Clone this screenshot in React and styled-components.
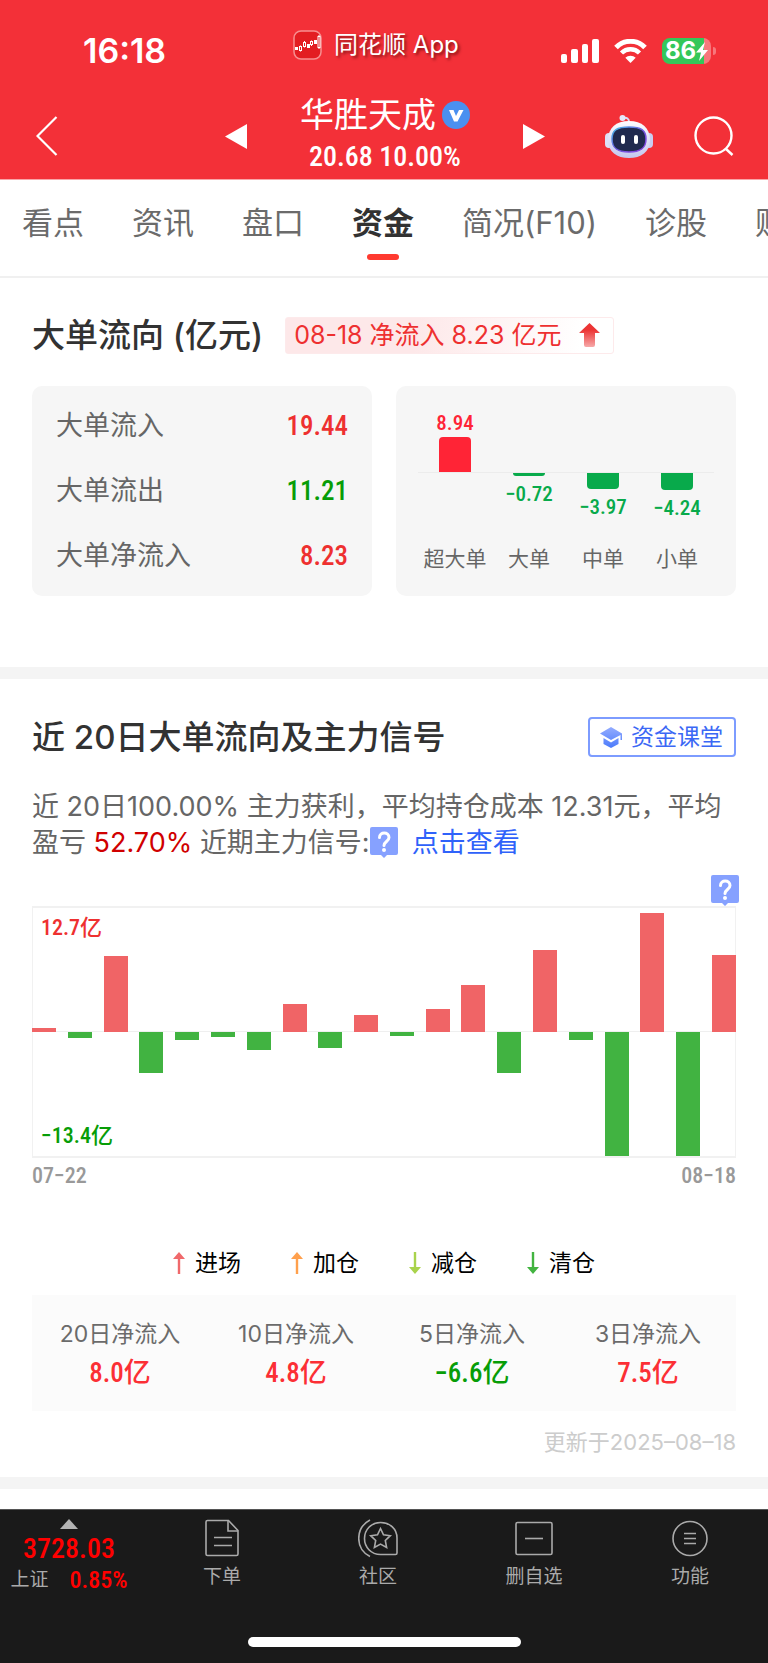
import React from 'react';
import styled, { createGlobalStyle } from 'styled-components';

const textFont = 'Inter, "Noto Sans CJK SC", sans-serif';
const numberFont = '"Roboto Condensed", "Noto Sans CJK SC", sans-serif';

const RED = '#ee3030';
const GREEN = '#079d07';

const GlobalStyle = createGlobalStyle`
  * {
    box-sizing: border-box;
  }
  body {
    margin: 0;
    background: #fff;
    color: #323232;
    font-family: ${textFont};
  }
  button {
    padding: 0;
    border: 0;
    background: none;
    color: inherit;
    font: inherit;
    cursor: pointer;
  }
  h1, h2, p, dl, dd {
    margin: 0;
  }
  svg {
    display: block;
    flex-shrink: 0;
  }
`;

const Header = styled.header`
  padding-bottom: 1px;
  background: #f33038;
  border-bottom: 1px solid #f9a5a8;
  color: #fff;
`;

const StatusBar = styled.div`
  display: flex;
  align-items: center;
  height: 94px;
  padding: 8px 52px 0 83px;
`;

const Clock = styled.span`
  font-size: 34px;
  font-weight: 600;
  line-height: 40px;
`;

const AppName = styled.span`
  display: flex;
  align-items: center;
  gap: 12px;
  margin: 0 auto 12px 127px;
  font-size: 24px;
  line-height: 32px;
  text-shadow: 2px 2px 3px rgba(60, 0, 0, 0.6);
`;

const StatusIcons = styled.div`
  display: flex;
  align-items: center;
  gap: 15px;
`;

const Battery = styled.div`
  display: flex;
  align-items: center;
  gap: 2px;

  &::after {
    content: '';
    width: 3px;
    height: 8px;
    border-radius: 0 3px 3px 0;
    background: #f7777c;
  }
`;

const BatteryBody = styled.span`
  display: flex;
  align-items: center;
  justify-content: center;
  width: 49px;
  height: 26px;
  border-radius: 8px;
  background: linear-gradient(90deg, #34c759 86%, #f7777c 86%);
  font-size: 24px;
  font-weight: 700;
  line-height: 26px;
`;

const StockNav = styled.div`
  display: grid;
  grid-template-columns: 1fr 320px 1fr;
  align-items: center;
  padding: 0 34px 0 36px;
`;

const StockSwitch = styled.div`
  display: flex;
  align-items: center;
  justify-content: space-between;
`;

const StockTitle = styled.div`
  text-align: center;
`;

const StockName = styled.h1`
  display: flex;
  align-items: center;
  gap: 6px;
  font-size: 34px;
  font-weight: 400;
  line-height: 42px;
`;

const StockPrice = styled.p`
  font-family: ${numberFont};
  font-size: 28px;
  font-weight: 500;
  line-height: 42px;
`;

const NavActions = styled.div`
  display: flex;
  align-items: center;
  justify-content: flex-end;
  gap: 41px;
`;

const Tabs = styled.nav`
  display: flex;
  gap: 48px;
  height: 98px;
  padding: 25px 0 0 22px;
  border-bottom: 2px solid #f0f0f0;
  overflow: hidden;
  white-space: nowrap;
`;

const Tab = styled.a`
  display: flex;
  flex-direction: column;
  align-items: center;
  flex-shrink: 0;
  gap: 13px;
  color: ${(p) => (p.$active ? '#323232' : '#6b6b6b')};
  font-size: 31px;
  font-weight: ${(p) => (p.$active ? 700 : 400)};
  line-height: 36px;
  text-decoration: none;

  &::after {
    content: '';
    width: 32px;
    height: 6px;
    border-radius: 3px;
    background: ${(p) => (p.$active ? '#ff3a30' : 'transparent')};
  }
`;

const Section = styled.section`
  padding: ${(p) => p.$padding};
  border-bottom: 12px solid #f4f4f4;
`;

const SectionHead = styled.div`
  display: flex;
  align-items: center;
  gap: 22px;
  height: 40px;
`;

const SectionTitle = styled.h2`
  font-size: 33px;
  font-weight: 500;
  line-height: 40px;
  white-space: nowrap;
`;

const FlowBadge = styled.span`
  display: flex;
  align-items: center;
  gap: 18px;
  height: 37px;
  padding: 0 13px 0 8px;
  border: 1px solid #fdeaeb;
  border-radius: 3px;
  background: linear-gradient(100deg, #fde8e9 40%, #fff 90%);
  color: ${RED};
  font-size: 25px;
  line-height: 35px;
  white-space: nowrap;
`;

const Cards = styled.div`
  display: grid;
  grid-template-columns: 1fr 1fr;
  gap: 24px;
  margin-top: 31px;
`;

const FlowList = styled.dl`
  display: flex;
  flex-direction: column;
  gap: 25px;
  padding: 20px 24px;
  border-radius: 10px;
  background: #f6f6f6;
`;

const FlowRow = styled.div`
  display: flex;
  align-items: center;
  justify-content: space-between;
  color: #666;
  font-size: 27px;
  line-height: 40px;
`;

const FlowValue = styled.dd`
  color: ${(p) => p.$color};
  font-family: ${numberFont};
  font-size: 27px;
  font-weight: 500;
`;

const OrderCard = styled.div`
  display: grid;
  grid-template-columns: repeat(4, 1fr);
  padding: 23px 22px 22px;
  border-radius: 10px;
  background: #f6f6f6;
`;

const OrderColumn = styled.div`
  display: flex;
  flex-direction: column;
  align-items: center;
  color: #666;
  font-size: 21px;
  line-height: 28px;
  white-space: nowrap;
`;

const BarArea = styled.div`
  display: flex;
  flex-direction: column;
  align-items: center;
  justify-content: ${(p) => (p.$up ? 'flex-end' : 'flex-start')};
  align-self: stretch;
  gap: ${(p) => (p.$up ? 0 : 5)}px;
  height: ${(p) => (p.$up ? 64 : 72)}px;
  border-bottom: ${(p) => (p.$up ? '1px solid #ececec' : '0')};
  color: ${(p) => (p.$up ? '#ff2436' : '#08aa4b')};
  font-family: ${numberFont};
  font-weight: 500;
  line-height: 27px;
`;

const OrderBar = styled.span`
  flex-shrink: 0;
  width: 32px;
  border-radius: ${(p) => (p.$up ? '4px 4px 0 0' : '0 0 4px 4px')};
  background: currentColor;
`;

const CourseButton = styled.button`
  display: flex;
  align-items: center;
  gap: 9px;
  height: 40px;
  margin-left: auto;
  padding: 0 11px 0 10px;
  border: 2px solid #7d9cff;
  border-radius: 4px;
  color: #3b68f5;
  font-size: 23px;
  line-height: 36px;
`;

const Summary = styled.p`
  margin-top: 32px;
  color: #666;
  font-size: 27px;
  line-height: 36px;
`;

const Percent = styled.span`
  color: #d00000;
`;

const ViewLink = styled.a`
  margin-left: 14px;
  color: #2f62fa;
  text-decoration: none;
`;

const HelpButton = styled.button`
  display: inline-block;
  vertical-align: ${(p) => (p.$inline ? '-6px' : 'top')};
`;

const ChartHelp = styled.div`
  display: flex;
  justify-content: flex-end;
  margin: 14px -3px 0 0;
`;

const ChartBox = styled.div`
  position: relative;
  border: 1px solid #f1f1f1;
  border-width: 2px 0;
  box-shadow: inset 1px 0 #f1f1f1, inset -1px 0 #f1f1f1;

  svg {
    width: 100%;
    height: 248px;
  }
`;

const ChartLimit = styled.span`
  position: absolute;
  left: 9px;
  ${(p) => (p.$low ? 'bottom: 5px' : 'top: 5px')};
  color: ${(p) => (p.$low ? GREEN : RED)};
  font-family: ${numberFont};
  font-size: 22px;
  font-weight: 500;
  line-height: 30px;
`;

const DateRange = styled.div`
  display: flex;
  justify-content: space-between;
  margin-top: 4px;
  color: #999;
  font-family: ${numberFont};
  font-size: 22px;
  font-weight: 500;
  line-height: 28px;
`;

const Legend = styled.div`
  display: flex;
  justify-content: center;
  gap: 50px;
  margin-top: 58px;
  color: #000;
  font-size: 23px;
  line-height: 30px;
`;

const LegendItem = styled.span`
  display: flex;
  align-items: center;
  gap: 10px;
`;

const Totals = styled.dl`
  display: grid;
  grid-template-columns: repeat(4, 1fr);
  margin-top: 17px;
  padding: 20px 0 17px;
  background: #fbfbfb;
  text-align: center;
`;

const TotalLabel = styled.dt`
  color: #6b6b6b;
  font-size: 23px;
  line-height: 38px;
`;

const TotalValue = styled.dd`
  color: ${(p) => p.$color};
  font-family: ${numberFont};
  font-size: 27px;
  font-weight: 500;
  line-height: 41px;
`;

const Updated = styled.p`
  margin-top: 17px;
  color: #ccc;
  font-size: 22px;
  line-height: 28px;
  text-align: right;
`;

const Footer = styled.footer`
  margin-top: 20px;
  padding-bottom: 16px;
  border-top: 1px solid #555;
  background: #1a1a1a;
`;

const BottomNav = styled.nav`
  display: grid;
  grid-template-columns: 144px repeat(4, 1fr);
  height: 127px;
`;

const IndexButton = styled.button`
  display: flex;
  flex-direction: column;
  align-items: center;
  padding: 9px 6px 0 0;
`;

const IndexPoint = styled.span`
  color: #f00;
  font-family: ${numberFont};
  font-size: 28px;
  font-weight: 500;
  line-height: 32px;
  margin-top: 4px;
`;

const IndexChange = styled.span`
  display: flex;
  gap: 21px;
  color: #f00;
  font-family: ${numberFont};
  font-size: 24px;
  font-weight: 500;
  line-height: 30px;
`;

const IndexName = styled.span`
  color: #aaa;
  font-size: 19px;
  font-weight: 400;
`;

const BottomButton = styled.button`
  display: flex;
  flex-direction: column;
  align-items: center;
  gap: 4px;
  padding-top: 8px;
  color: #aaa;
  font-size: 19px;
  line-height: 28px;
`;

const HomeIndicator = styled.div`
  width: 273px;
  height: 10px;
  margin: 0 auto;
  border-radius: 5px;
  background: #fff;
`;

const tabs = ['看点', '资讯', '盘口', '资金', '简况(F10)', '诊股', '财务'];

const flows = [
  { label: '大单流入', value: '19.44', color: RED },
  { label: '大单流出', value: '11.21', color: GREEN },
  { label: '大单净流入', value: '8.23', color: RED },
];

const orders = [
  { label: '超大单', value: 8.94 },
  { label: '大单', value: -0.72 },
  { label: '中单', value: -3.97 },
  { label: '小单', value: -4.24 },
];

// net inflow per day, in 亿
const days = [
  0.45, -0.6, 8.1, -4.4, -0.9, -0.5, -1.9, 3, -1.7, 1.8, -0.4, 2.5, 5.05, -4.4,
  8.8, -0.9, -13.3, 12.7, -13.4, 8.2,
];

const signals = [
  { label: '进场', color: '#f0696b', up: true },
  { label: '加仓', color: '#ffa04d', up: true },
  { label: '减仓', color: '#a9d34c', up: false },
  { label: '清仓', color: '#43b440', up: false },
];

const totals = [
  { label: '20日净流入', value: '8.0亿', color: '#fb2f35' },
  { label: '10日净流入', value: '4.8亿', color: '#fb2f35' },
  { label: '5日净流入', value: '−6.6亿', color: GREEN },
  { label: '3日净流入', value: '7.5亿', color: '#fb2f35' },
];

const AppLogo = () => (
  <svg width="29" height="30" viewBox="0 0 29 30">
    <rect x="1" y="1" width="27" height="28" rx="7" fill="#e31d22" stroke="#f78f90" strokeWidth="1.5" />
    <g fill="#fff">
      <rect x="2" y="17" width="3" height="3" />
      <rect x="14" y="14" width="3" height="4" />
      <rect x="21" y="10" width="3" height="4" />
    </g>
    <g fill="none" stroke="#fff">
      <path d="M7.500 15.500v1M7.500 20.500v1M11.500 11v1.500M11.500 16.500v1M18.500 10.500v1M18.500 14.500v1.500M26 5v2M26 17v2" />
      <rect x="6.500" y="16.500" width="2" height="4" />
      <rect x="10.500" y="12.500" width="2" height="4" />
      <rect x="17.500" y="11.500" width="2" height="3" />
      <rect x="25" y="6.500" width="2" height="11" />
    </g>
  </svg>
);

const Signal = () => (
  <svg width="38" height="24" viewBox="0 0 38 24" fill="#fff">
    <rect x="0" y="15" width="6" height="9" rx="2" />
    <rect x="10" y="10" width="7" height="14" rx="2" />
    <rect x="21" y="5" width="6" height="19" rx="2" />
    <rect x="31" y="0" width="7" height="24" rx="2" />
  </svg>
);

const Wifi = () => (
  <svg width="33" height="24" viewBox="0 0 33 24">
    <path d="M2 8.500C10 .2 23 .2 31 8.500" fill="none" stroke="#fff" strokeWidth="5" />
    <path d="M7.500 14C12.500 9 20.500 9 25.500 14" fill="none" stroke="#fff" strokeWidth="4.500" />
    <path d="M16.500 24l-5.200-5.300c2.800-2.700 7.600-2.700 10.400 0z" fill="#fff" />
  </svg>
);

const Bolt = () => (
  <svg width="12" height="19" viewBox="0 0 12 19" fill="#fff">
    <path d="M9 0L0 10.500h5L3 19l9-11H7z" />
  </svg>
);

const Robot = () => (
  <svg width="48" height="45" viewBox="0 0 48 45">
    <defs>
      <linearGradient id="shell" x1="0" y1="0" x2="0" y2="1">
        <stop offset="0" stopColor="#fdfdff" />
        <stop offset="1" stopColor="#c3c6ee" />
      </linearGradient>
      <linearGradient id="rim" x1="0" y1="0" x2="1" y2="1">
        <stop offset="0" stopColor="#45bfe8" />
        <stop offset="0.5" stopColor="#6f5be0" />
        <stop offset="1" stopColor="#8a3fe0" />
      </linearGradient>
    </defs>
    <path d="M18 4q6-1 6 4" fill="none" stroke="#d9dcf6" strokeWidth="2" />
    <circle cx="17.500" cy="4" r="3" fill="#e4e8fb" />
    <rect x="0" y="19" width="8" height="15" rx="4" fill="#dde0f6" />
    <rect x="40" y="19" width="8" height="15" rx="4" fill="#c9cdf1" />
    <path d="M24 7c13 0 21 7 21 19s-9 18-21 18S3 38 3 26 11 7 24 7z" fill="url(#shell)" />
    <path d="M24 13c12 0 17 3 17 12s-5 13-17 13S7 34 7 25s5-12 17-12z" fill="#202a4e" stroke="url(#rim)" strokeWidth="1.500" />
    <rect x="16" y="21" width="4" height="9" rx="2" fill="#fff" />
    <rect x="29" y="21" width="4" height="9" rx="2" fill="#fff" />
  </svg>
);

const HelpIcon = () => (
  <svg width="28" height="31" viewBox="0 0 28 31">
    <path d="M2 0h24q2 0 2 2v24q0 2-2 2h-9l-3 3-3-3H2q-2 0-2-2V2q0-2 2-2z" fill="#86a1ff" />
    <path d="M9.500 10.500c0-6 9.500-6 9.500 0 0 4-5 4-5 8" fill="none" stroke="#fff" strokeWidth="3" strokeLinecap="round" />
    <circle cx="14" cy="23" r="2" fill="#fff" />
  </svg>
);

const CapIcon = () => (
  <svg width="22" height="21" viewBox="0 0 22 21">
    <defs>
      <linearGradient id="cap" x1="0" y1="0" x2="0" y2="1">
        <stop offset="0" stopColor="#94acff" />
        <stop offset="1" stopColor="#4b7bfb" />
      </linearGradient>
    </defs>
    <path d="M11 0l11 6.500V13h-1.500V8L11 13 0 6.500zM3.500 11l7.500 4.500 7.500-4.500v6L11 21l-7.500-4z" fill="url(#cap)" />
  </svg>
);

const InflowArrow = () => (
  <svg width="21" height="24" viewBox="0 0 21 24">
    <defs>
      <linearGradient id="inflow" x1="0" y1="0" x2="0" y2="1">
        <stop offset="0.300" stopColor="#ec3535" />
        <stop offset="1" stopColor="#f6a9a9" />
      </linearGradient>
    </defs>
    <path d="M10.500 0L21 10h-5v12q0 2-2 2H7q-2 0-2-2V10H0z" fill="url(#inflow)" />
  </svg>
);

const SignalArrow = ({ color, up }) => (
  <svg width="12" height="22" viewBox="0 0 12 22">
    <path
      d={up ? 'M6 0l6 7H7.200v15H4.800V7H0z' : 'M6 22l6-7H7.200V0H4.800v15H0z'}
      fill={color}
    />
  </svg>
);

const DailyChart = () => (
  <svg viewBox="0 0 704 248" preserveAspectRatio="none">
    <path d="M0 123.500H704" stroke="#efefef" />
    {days.map((value, i) => {
      const height = Math.round(Math.abs(value) * 9.34);
      return (
        <rect
          key={i}
          x={Math.round((i * 680) / 19)}
          y={value > 0 ? 124 - height : 124}
          width="24"
          height={height}
          fill={value > 0 ? '#f06466' : '#41b341'}
        />
      );
    })}
  </svg>
);

const bottomItems = [
  {
    label: '下单',
    icon: (
      <>
        <path d="M5.500 2.500h21L36 12.500V36q0 1.500-1.500 1.500h-29Q4 37.500 4 36V4q0-1.500 1.500-1.500z" />
        <path d="M26 2.500V13h10M12 19.500h18M12 27.500h18" />
      </>
    ),
  },
  {
    label: '社区',
    icon: (
      <>
        <path d="M22.500 4.500C32 4.500 39 11 39 20v15q0 1.500-1.500 1.500h-15C13 36.500 6.500 29 6.500 20.500S13 4.500 22.500 4.500z" />
        <path d="M12 2C-3 10-3 31 12 38.500" />
        <path d="M22.500 10.500l3 6.300 6.800.9-5 4.800 1.300 7-6.100-3.400-6.100 3.400 1.300-7-5-4.800 6.800-.9z" />
      </>
    ),
  },
  {
    label: '删自选',
    icon: (
      <>
        <rect x="2" y="4.500" width="36" height="32" rx="1.500" />
        <path d="M11 20.500h18" />
      </>
    ),
  },
  {
    label: '功能',
    icon: (
      <>
        <circle cx="20" cy="20.500" r="17" />
        <path d="M14 15.500h12M14 20.500h12M14 25.500h12" />
      </>
    ),
  },
];

const formatValue = (value) => (value < 0 ? `−${-value}` : `${value}`);

function OrderItem({ label, value }) {
  const up = value > 0;
  const bar = <OrderBar $up={up} style={{ height: Math.ceil(Math.abs(value) * 3.9) }} />;
  return (
    <OrderColumn>
      <BarArea $up>
        {up && formatValue(value)}
        {up && bar}
      </BarArea>
      <BarArea>
        {!up && bar}
        {!up && formatValue(value)}
      </BarArea>
      {label}
    </OrderColumn>
  );
}

export default function App() {
  return (
    <>
      <GlobalStyle />
      <Header>
        <StatusBar>
          <Clock>16:18</Clock>
          <AppName>
            <AppLogo />
            同花顺 App
          </AppName>
          <StatusIcons>
            <Signal />
            <Wifi />
            <Battery>
              <BatteryBody>
                86
                <Bolt />
              </BatteryBody>
            </Battery>
          </StatusIcons>
        </StatusBar>
        <StockNav>
          <button aria-label="返回">
            <svg width="22" height="40" viewBox="0 0 22 40" fill="none" stroke="#fff" strokeWidth="2.200">
              <path d="M20.500 1L1.500 20l19 19" />
            </svg>
          </button>
          <StockSwitch>
            <button aria-label="上一只">
              <svg width="22" height="25" viewBox="0 0 22 25" fill="#fff">
                <path d="M22 0v25L0 12.500z" />
              </svg>
            </button>
            <StockTitle>
              <StockName>
                华胜天成
                <svg width="28" height="28" viewBox="0 0 28 28">
                  <circle cx="14" cy="14" r="14" fill="#4a90f0" />
                  <path d="M7 9h4.500l2.500 6 3-6h4.500l-6 11.500h-3.500z" fill="#fff" />
                </svg>
              </StockName>
              <StockPrice>20.68 10.00%</StockPrice>
            </StockTitle>
            <button aria-label="下一只">
              <svg width="22" height="25" viewBox="0 0 22 25" fill="#fff">
                <path d="M0 0v25l22-12.500z" />
              </svg>
            </button>
          </StockSwitch>
          <NavActions>
            <button aria-label="智能助手">
              <Robot />
            </button>
            <button aria-label="搜索">
              <svg width="40" height="40" viewBox="0 0 40 40" fill="none" stroke="#fff" strokeWidth="2.400">
                <circle cx="19.500" cy="19.500" r="18" />
                <path d="M31.500 32.500l7 6.500" />
              </svg>
            </button>
          </NavActions>
        </StockNav>
      </Header>

      <Tabs>
        {tabs.map((tab) => (
          <Tab key={tab} href="#" $active={tab === '资金'}>
            {tab}
          </Tab>
        ))}
      </Tabs>

      <Section $padding="37px 32px 71px">
        <SectionHead>
          <SectionTitle>大单流向 (亿元)</SectionTitle>
          <FlowBadge>
            08-18 净流入 8.23 亿元
            <InflowArrow />
          </FlowBadge>
        </SectionHead>
        <Cards>
          <FlowList>
            {flows.map((flow) => (
              <FlowRow key={flow.label}>
                <dt>{flow.label}</dt>
                <FlowValue $color={flow.color}>{flow.value}</FlowValue>
              </FlowRow>
            ))}
          </FlowList>
          <OrderCard>
            {orders.map((order) => (
              <OrderItem key={order.label} {...order} />
            ))}
          </OrderCard>
        </Cards>
      </Section>

      <Section $padding="38px 32px 21px">
        <SectionHead>
          <SectionTitle>近 20日大单流向及主力信号</SectionTitle>
          <CourseButton>
            <CapIcon />
            资金课堂
          </CourseButton>
        </SectionHead>
        <Summary>
          近 20日100.00% 主力获利，平均持仓成本 12.31元，平均盈亏{' '}
          <Percent>52.70%</Percent> 近期主力信号:
          <HelpButton $inline aria-label="主力信号说明">
            <HelpIcon />
          </HelpButton>
          <ViewLink href="#">点击查看</ViewLink>
        </Summary>
        <ChartHelp>
          <HelpButton aria-label="图表说明">
            <HelpIcon />
          </HelpButton>
        </ChartHelp>
        <ChartBox>
          <DailyChart />
          <ChartLimit>12.7亿</ChartLimit>
          <ChartLimit $low>−13.4亿</ChartLimit>
        </ChartBox>
        <DateRange>
          <span>07−22</span>
          <span>08−18</span>
        </DateRange>
        <Legend>
          {signals.map((signal) => (
            <LegendItem key={signal.label}>
              <SignalArrow color={signal.color} up={signal.up} />
              {signal.label}
            </LegendItem>
          ))}
        </Legend>
        <Totals>
          {totals.map((total) => (
            <div key={total.label}>
              <TotalLabel>{total.label}</TotalLabel>
              <TotalValue $color={total.color}>{total.value}</TotalValue>
            </div>
          ))}
        </Totals>
        <Updated>更新于2025–08–18</Updated>
      </Section>

      <Footer>
        <BottomNav>
          <IndexButton>
            <svg width="18" height="10" viewBox="0 0 18 10" fill="#b3b3b3">
              <path d="M9 0l9 10H0z" />
            </svg>
            <IndexPoint>3728.03</IndexPoint>
            <IndexChange>
              <IndexName>上证</IndexName>
              0.85%
            </IndexChange>
          </IndexButton>
          {bottomItems.map((item) => (
            <BottomButton key={item.label}>
              <svg width="40" height="41" viewBox="0 0 40 41" fill="none" stroke="#aaa" strokeWidth="1.600">
                {item.icon}
              </svg>
              {item.label}
            </BottomButton>
          ))}
        </BottomNav>
        <HomeIndicator />
      </Footer>
    </>
  );
}
